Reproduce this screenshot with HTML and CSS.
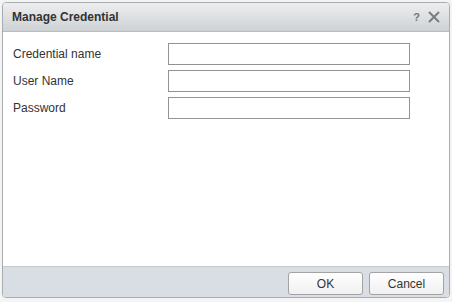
FILE: index.html
```html
<!DOCTYPE html>
<html lang="en">
<head>
    <meta charset="UTF-8">
    <title>Manage Credential</title>
    <link rel="stylesheet" href="styles.css">
</head>
<body>
<div class="dialog">
    <div class="dialog-header">
        <span class="dialog-title">Manage Credential</span>
        <span class="header-tools">
            <span class="help">?</span>
            <svg class="close" width="12" height="12" viewBox="0 0 12 12">
                <path d="M1 1 L11 11 M11 1 L1 11" stroke="#7a7d80" stroke-width="2" fill="none"/>
            </svg>
        </span>
    </div>
    <div class="dialog-body">
        <div class="form-row">
            <label for="credName">Credential name</label>
            <input type="text" id="credName">
        </div>
        <div class="form-row">
            <label for="userName">User Name</label>
            <input type="text" id="userName">
        </div>
        <div class="form-row">
            <label for="password">Password</label>
            <input type="password" id="password">
        </div>
    </div>
    <div class="dialog-footer">
        <button type="button">OK</button>
        <button type="button">Cancel</button>
    </div>
</div>
</body>
</html>
```
FILE: styles.css
```css
body {
    margin: 0;
    background: #f4f4f4;
    font-family: Arial, "Liberation Sans", sans-serif;
    font-size: 12px;
    color: #333;
}

.dialog {
    margin: 2px 0 0 2px;
    width: 446px;
    height: 294px;
    border: 1px solid #a9acaf;
    border-radius: 4px;
    background: #fff;
    display: flex;
    flex-direction: column;
    overflow: hidden;
}

.dialog-header {
    height: 28px;
    flex-shrink: 0;
    border-bottom: 1px solid #b9bcbf;
    background: linear-gradient(#eceeef, #cfd2d5);
    display: flex;
    align-items: center;
    justify-content: space-between;
    padding: 0 9px;
}

.dialog-title {
    font-weight: bold;
    color: #333;
    font-size: 12px;
}

.header-tools {
    display: flex;
    align-items: center;
    gap: 8px;
}

.help {
    color: #777;
    font-size: 11px;
    font-weight: bold;
}

.close {
    display: block;
}

.dialog-body {
    flex: 1;
    padding: 11px 10px 0 10px;
    display: flex;
    flex-direction: column;
    gap: 5px;
}

.form-row {
    display: flex;
    align-items: center;
}

.form-row label {
    width: 155px;
    color: #333;
}

.form-row input {
    width: 242px;
    height: 22px;
    box-sizing: border-box;
    border: 1px solid #939393;
    padding: 2px 4px;
    margin: 0;
}

.dialog-footer {
    height: 25px;
    flex-shrink: 0;
    border-top: 1px solid #c4c9ce;
    background: #d9dee4;
    display: flex;
    justify-content: flex-end;
    align-items: flex-start;
    gap: 6px;
    padding: 5px 5px 0 0;
}

.dialog-footer button {
    width: 75px;
    height: 23px;
    border: 1px solid #a3a3a3;
    border-radius: 3px;
    background: linear-gradient(#ffffff, #f0f0f0);
    font-family: Arial, "Liberation Sans", sans-serif;
    font-size: 12px;
    color: #333;
    padding: 0;
}
```
